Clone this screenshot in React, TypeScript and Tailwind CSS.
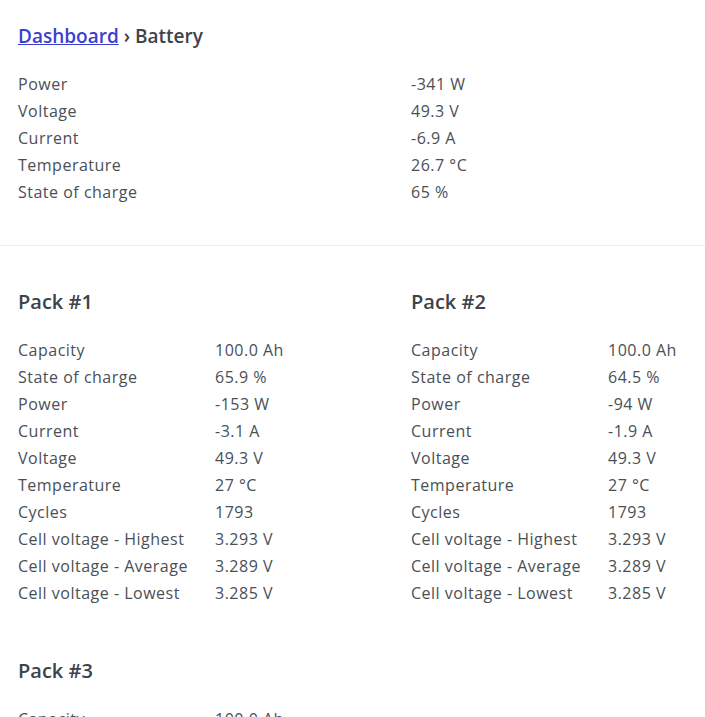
const summary = [
  ["Power", "-341 W"],
  ["Voltage", "49.3 V"],
  ["Current", "-6.9 A"],
  ["Temperature", "26.7 °C"],
  ["State of charge", "65 %"],
];

const packs = [
  {
    name: "Pack #1",
    rows: [
      ["Capacity", "100.0 Ah"],
      ["State of charge", "65.9 %"],
      ["Power", "-153 W"],
      ["Current", "-3.1 A"],
      ["Voltage", "49.3 V"],
      ["Temperature", "27 °C"],
      ["Cycles", "1793"],
      ["Cell voltage - Highest", "3.293 V"],
      ["Cell voltage - Average", "3.289 V"],
      ["Cell voltage - Lowest", "3.285 V"],
    ],
  },
  {
    name: "Pack #2",
    rows: [
      ["Capacity", "100.0 Ah"],
      ["State of charge", "64.5 %"],
      ["Power", "-94 W"],
      ["Current", "-1.9 A"],
      ["Voltage", "49.3 V"],
      ["Temperature", "27 °C"],
      ["Cycles", "1793"],
      ["Cell voltage - Highest", "3.293 V"],
      ["Cell voltage - Average", "3.289 V"],
      ["Cell voltage - Lowest", "3.285 V"],
    ],
  },
  {
    name: "Pack #3",
    rows: [
      ["Capacity", "100.0 Ah"],
      ["State of charge", "65.2 %"],
      ["Power", "-94 W"],
      ["Current", "-1.9 A"],
    ],
  },
];

function Pack({ name, rows }: { name: string; rows: string[][] }) {
  return (
    <div className="w-[393px] shrink-0">
      <h2 className="text-[20px] leading-[28px] font-semibold text-[#3d434a] mb-5">{name}</h2>
      <table className="w-[393px] tracking-[0.5px]">
        <tbody>
          {rows.map(([k, v]) => (
            <tr key={k} className="h-[27px]">
              <td className="w-[197px] p-0">{k}</td>
              <td className="p-0">{v}</td>
            </tr>
          ))}
        </tbody>
      </table>
    </div>
  );
}

export default function App() {
  return (
    <main
      className="min-h-screen bg-white text-[#4a4f56] text-[16px] overflow-hidden"
      style={{ fontFamily: '"Open Sans", "Noto Sans", sans-serif' }}
    >
      {/* header + totals */}
      <section className="px-[18px] pt-[22px] pb-[40px]">
        <h1 className="text-[19px] leading-[28px] font-semibold text-[#3d434a] mb-5">
          <a href="#" className="text-[#3b3fd0] underline">Dashboard</a>
          <span> › Battery</span>
        </h1>
        <table className="tracking-[0.5px]">
          <tbody>
            {summary.map(([k, v]) => (
              <tr key={k} className="h-[27px]">
                <td className="w-[393px] p-0">{k}</td>
                <td className="p-0">{v}</td>
              </tr>
            ))}
          </tbody>
        </table>
      </section>

      <hr className="border-0 border-t border-[#ececec]" />

      {/* packs */}
      <section className="px-[18px] pt-[42px] flex flex-wrap w-[840px] gap-y-[51px]">
        {packs.map((p) => (
          <Pack key={p.name} name={p.name} rows={p.rows} />
        ))}
      </section>
    </main>
  );
}
